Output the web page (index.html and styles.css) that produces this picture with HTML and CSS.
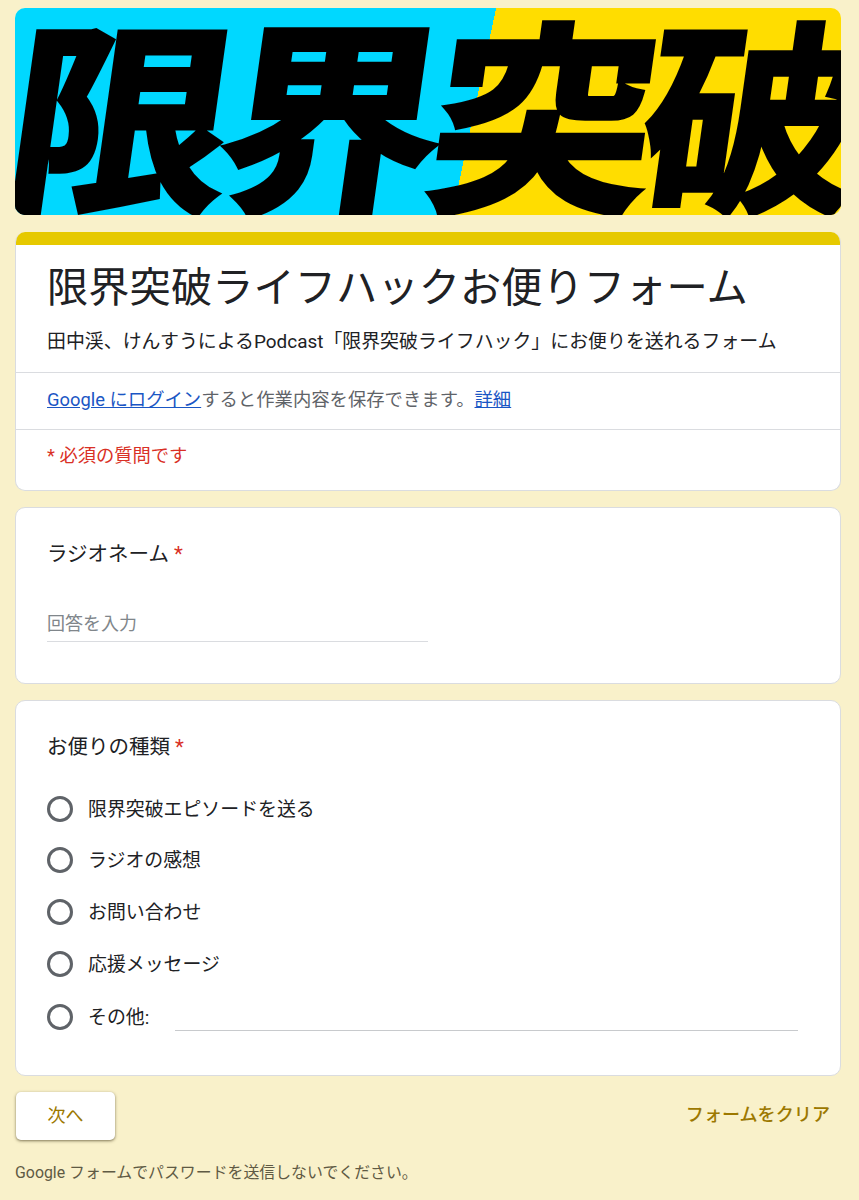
FILE: index.html
```html
<!DOCTYPE html>
<html lang="ja">
<head>
<meta charset="utf-8">
<title>限界突破ライフハックお便りフォーム</title>
<link rel="stylesheet" href="styles.css">
</head>
<body>
<main class="page">
  <div class="banner"><span class="banner-text">限界突破</span></div>

  <section class="card intro">
    <div class="intro-band"></div>
    <div class="intro-head">
      <h1 class="title">限界突破ライフハックお便りフォーム</h1>
      <p class="desc">田中渓、けんすうによるPodcast「限界突破ライフハック」にお便りを送れるフォーム</p>
    </div>
    <div class="login"><a class="link" href="#">Google にログイン</a>すると作業内容を保存できます。<a class="link" href="#">詳細</a></div>
    <div class="required">* 必須の質問です</div>
  </section>

  <section class="card question q-name">
    <div class="q-title">ラジオネーム <span class="star">*</span></div>
    <div class="text-input">回答を入力</div>
  </section>

  <section class="card question q-type">
    <div class="q-title">お便りの種類 <span class="star">*</span></div>
    <div class="options">
      <div class="option"><span class="radio"></span><span class="opt-label">限界突破エピソードを送る</span></div>
      <div class="option"><span class="radio"></span><span class="opt-label">ラジオの感想</span></div>
      <div class="option"><span class="radio"></span><span class="opt-label">お問い合わせ</span></div>
      <div class="option"><span class="radio"></span><span class="opt-label">応援メッセージ</span></div>
      <div class="option other"><span class="radio"></span><span class="opt-label">その他:</span><span class="other-line"></span></div>
    </div>
  </section>

  <div class="actions">
    <button class="next" type="button"><span class="next-label">次へ</span></button>
    <a class="clear" href="#">フォームをクリア</a>
  </div>
  <p class="footer">Google フォームでパスワードを送信しないでください。</p>
</main>
</body>
</html>
```
FILE: styles.css
```css
* { box-sizing: border-box; }
html, body { margin: 0; padding: 0; }
body {
  background: #f9f1ca;
  font-family: Roboto, "Noto Sans CJK JP", sans-serif;
  color: #202124;
}
.page {
  height: 1200px;
  overflow: hidden;
  padding: 8px 18px 0 15px;
}
.banner {
  height: 207px;
  border-radius: 10px;
  overflow: hidden;
  display: flex;
  align-items: flex-start;
  background: linear-gradient(102deg, #00d8ff 55.3%, #ffdd00 55.3%);
}
.banner-text {
  display: block;
  flex: none;
  margin: -18px 0 0 -20px;
  font-family: "Noto Sans CJK JP", sans-serif;
  font-weight: 700;
  font-size: 205px;
  line-height: 1.15;
  letter-spacing: -11px;
  white-space: nowrap;
  color: #000;
  -webkit-text-stroke: 5px #000;
  transform-origin: 0 100%;
  transform: skewX(-8deg) scaleX(1.09);
}
.card {
  background: #fff;
  border: 1px solid #dadce0;
  border-radius: 10px;
  overflow: hidden;
}
.intro {
  margin-top: 17px;
  height: 259px;
  border-top: 0;
}
.intro-band {
  height: 13px;
  background: #e6c900;
  margin: 0 -1px;
}
.intro-head {
  height: 128px;
  padding: 17px 31px 0;
  border-bottom: 1px solid #dadce0;
}
.title {
  margin: 0;
  font-size: 41.3px;
  font-weight: 400;
  line-height: 52px;
  white-space: nowrap;
}
.desc {
  margin: 14px 0 0;
  font-size: 18.92px;
  line-height: 28px;
  white-space: nowrap;
}
.login {
  height: 57px;
  padding: 13px 31px 0;
  font-size: 18.35px;
  line-height: 28px;
  color: #5f6368;
  border-bottom: 1px solid #dadce0;
}
.link { color: #1a56c4; }
.required {
  padding: 12px 31px 0;
  font-size: 18.3px;
  line-height: 28px;
  color: #d93025;
}
.question {
  margin-top: 16px;
  padding: 31px 31px 0;
}
.q-name { height: 177px; }
.q-type { height: 376px; }
.q-title {
  font-size: 20.5px;
  line-height: 30px;
}
.star { color: #d93025; }
.text-input {
  margin-top: 39px;
  width: 381px;
  height: 34px;
  padding-top: 1px;
  font-size: 18px;
  line-height: 30px;
  color: #80868b;
  border-bottom: 1px solid #dadce0;
}
.options {
  margin-top: 32px;
  display: flex;
  flex-direction: column;
  gap: 22.75px;
}
.option {
  display: flex;
  align-items: center;
  height: 29px;
}
.radio {
  flex: none;
  width: 26px;
  height: 26px;
  border: 3px solid #5f6368;
  border-radius: 50%;
  margin-right: 15px;
}
.opt-label {
  font-size: 18.9px;
  line-height: 29px;
  white-space: nowrap;
  padding-top: 1px;
}
.other-line {
  flex: none;
  width: 623px;
  height: 1px;
  margin: 28px 0 0 26px;
  background: #c8cacd;
}
.other { margin-top: 1px; }
.actions {
  margin-top: 16px;
  display: flex;
  justify-content: space-between;
  align-items: center;
  height: 48px;
}
.next {
  width: 99px;
  height: 48px;
  margin-left: 1px;
  padding: 0 0 5px;
  background: #fff;
  border: 0;
  border-radius: 5px;
  box-shadow: 0 1px 3px 1px rgba(60, 50, 20, .2), 0 1px 2px rgba(60, 50, 20, .4);
  font-family: inherit;
  font-size: 18px;
  color: #9c7800;
}
.next-label { display: block; }
.clear {
  margin: -7px 11px 0 0;
  font-size: 18.1px;
  font-weight: 500;
  color: #9c7800;
  text-decoration: none;
}
.footer {
  margin: 21px 0 0;
  font-size: 15.9px;
  line-height: 24px;
  color: #5f5a44;
}
```
